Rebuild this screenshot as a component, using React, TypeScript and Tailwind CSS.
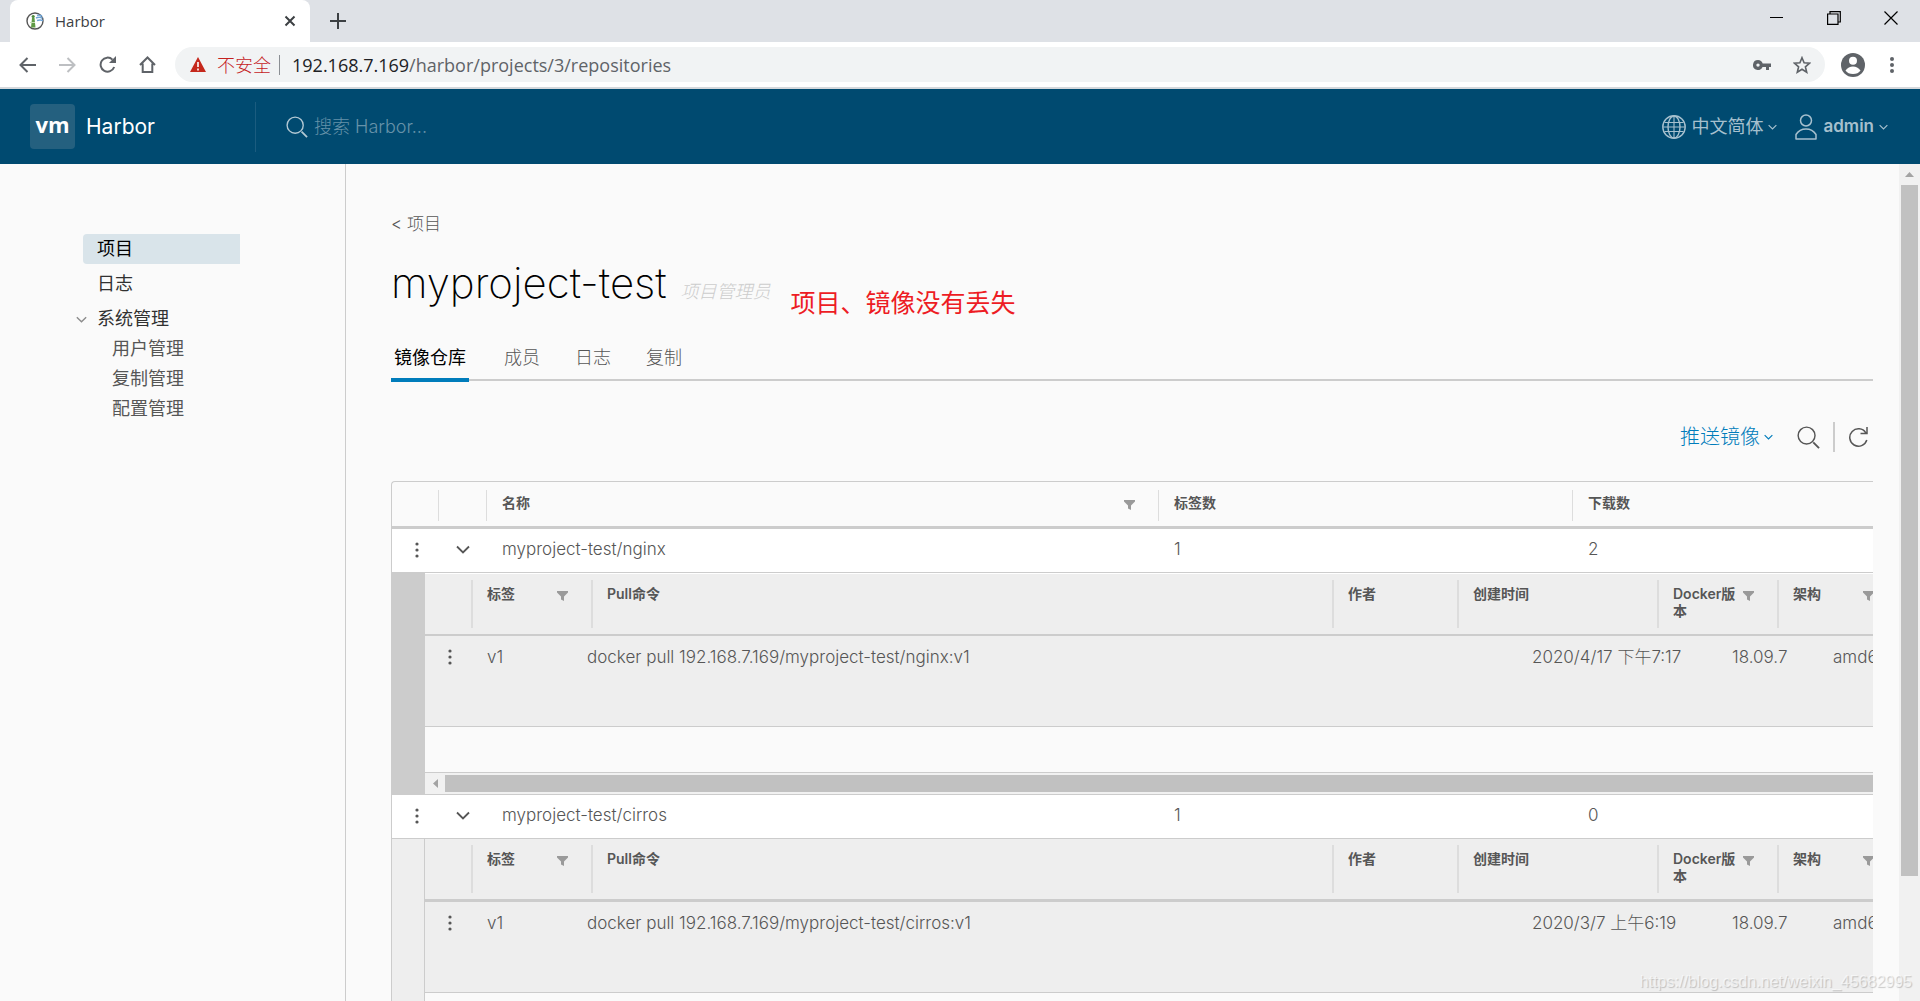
import React, { useState } from 'react';

interface Tag {
  name: string;
  pull: string;
  author: string;
  created: string;
  docker: string;
  arch: string;
}

interface Repo {
  name: string;
  tagsCount: number;
  pullCount: number;
  active: boolean;
  tags: Tag[];
}

const repos: Repo[] = [
  {
    name: 'myproject-test/nginx',
    tagsCount: 1,
    pullCount: 2,
    active: true,
    tags: [
      {
        name: 'v1',
        pull: 'docker pull 192.168.7.169/myproject-test/nginx:v1',
        author: '',
        created: '2020/4/17 下午7:17',
        docker: '18.09.7',
        arch: 'amd64',
      },
    ],
  },
  {
    name: 'myproject-test/cirros',
    tagsCount: 1,
    pullCount: 0,
    active: false,
    tags: [
      {
        name: 'v1',
        pull: 'docker pull 192.168.7.169/myproject-test/cirros:v1',
        author: '',
        created: '2020/3/7 上午6:19',
        docker: '18.09.7',
        arch: 'amd64',
      },
    ],
  },
];

const projectTabs = ['镜像仓库', '成员', '日志', '复制'];
const adminLinks = ['用户管理', '复制管理', '配置管理'];

function Caret({ className = '' }: { className?: string }) {
  return (
    <svg viewBox="0 0 14 9" fill="none" stroke="currentColor" className={className}>
      <path d="M1 1.5l6 6 6-6" strokeWidth="1.8" />
    </svg>
  );
}

function FilterIcon() {
  return (
    <svg viewBox="0 0 11 10" className="h-[10px] w-[11px] shrink-0">
      <path d="M0 0h11v1.5L7 5.5V10l-3-1.5v-3L0 1.5z" fill="#9a9a9a" />
    </svg>
  );
}

function Dots() {
  return (
    <svg viewBox="0 0 4 16" className="h-4 w-1" fill="#565656">
      <circle cx="2" cy="2" r="1.6" />
      <circle cx="2" cy="8" r="1.6" />
      <circle cx="2" cy="14" r="1.6" />
    </svg>
  );
}

function SearchIcon({ className = '' }: { className?: string }) {
  return (
    <svg viewBox="0 0 24 24" fill="none" stroke="currentColor" strokeWidth="1.5" className={className}>
      <circle cx="10" cy="10" r="8.8" />
      <path d="M17 17l6 6" strokeWidth="1.9" />
    </svg>
  );
}

function BrowserChrome() {
  return (
    <div className="shrink-0 font-['Open_Sans','Noto_Sans_CJK_SC',sans-serif]">
      <div className="flex h-[42px] items-stretch bg-[#dee1e6] pl-[10px]">
        <div className="flex w-[300px] items-center rounded-t-lg bg-white pr-[14px] pl-4">
          <svg viewBox="0 0 18 18" className="mr-[11px] h-[18px] w-[18px]">
            <circle cx="9" cy="9" r="8" fill="#fff" stroke="#555" strokeWidth="1.4" />
            <path d="M11 3.5q2-1 5 .5M10 6q3-1.500 6.500 0M11 8.500q3-1 6 0" stroke="#6fa5d8" strokeWidth="1.4" fill="none" />
            <path d="M6 6h2.500l1 9.500H5z" fill="#5f9a45" />
            <circle cx="7.200" cy="4.500" r="1.600" fill="#4c8a3a" />
            <path d="M4 10.500h5" stroke="#c6dfb5" strokeWidth="1" />
          </svg>
          <span className="flex-1 text-[15px] text-[#3c4043]">Harbor</span>
          <button aria-label="关闭标签页">
            <svg viewBox="0 0 12 12" className="h-3 w-3" stroke="#3c4043" strokeWidth="2">
              <path d="M1.500 1.500l9 9M10.500 1.500l-9 9" />
            </svg>
          </button>
        </div>
        <button aria-label="新标签页" className="ml-5">
          <svg viewBox="0 0 16 16" className="h-4 w-4" stroke="#3c4043" strokeWidth="2">
            <path d="M8 0v16M0 8h16" />
          </svg>
        </button>
        <div className="ml-auto flex items-center gap-[43px] pr-[22px] pb-[6px]">
          <button aria-label="最小化">
            <svg viewBox="0 0 14 14" className="h-[14px] w-[14px]" stroke="#000" shapeRendering="crispEdges">
              <path d="M0 6.500h13" />
            </svg>
          </button>
          <button aria-label="还原">
            <svg viewBox="0 0 14 14" className="h-[14px] w-[14px]" fill="none" stroke="#000" strokeWidth="1.200">
              <path d="M.6 3h10.400v10.400H.6z M3 3V.7h10.300V11H11" />
            </svg>
          </button>
          <button aria-label="关闭">
            <svg viewBox="0 0 14 14" className="h-[14px] w-[14px]" stroke="#000" strokeWidth="1.200">
              <path d="M.5 .5l13 13M13.500 .5l-13 13" />
            </svg>
          </button>
        </div>
      </div>
      <div className="flex h-[47px] items-center border-b-2 border-[#d5d8dc] bg-white pr-[26px] pl-[19px]">
        <div className="flex items-center gap-[23px] text-[#5f6368]">
          <button aria-label="后退">
            <svg viewBox="0 0 17 16" className="h-4 w-[17px]" fill="none" stroke="currentColor" strokeWidth="2">
              <path d="M17 8H1.500M8.500 1L1.500 8l7 7" />
            </svg>
          </button>
          <button aria-label="前进" className="text-[#bdbfc2]">
            <svg viewBox="0 0 17 16" className="h-4 w-[17px]" fill="none" stroke="currentColor" strokeWidth="2">
              <path d="M0 8h15.500M8.500 1l7 7-7 7" />
            </svg>
          </button>
          <button aria-label="重新加载">
            <svg viewBox="0 0 17 17" className="h-[17px] w-[17px]" fill="none" stroke="currentColor" strokeWidth="2">
              <path d="M15.200 11A7 7 0 1 1 13.500 3.600" />
              <path d="M17 0v7h-7z" fill="currentColor" stroke="none" />
            </svg>
          </button>
          <button aria-label="主页">
            <svg viewBox="0 0 17 17" className="h-[17px] w-[17px]" fill="none" stroke="currentColor" strokeWidth="2">
              <path d="M1 9l7.500-7.500L16 9M3.700 7.500V16h9.600V7.500" />
            </svg>
          </button>
        </div>
        <div className="ml-[19px] flex h-[35px] flex-1 items-center rounded-full bg-[#f1f3f4] pr-[14px] pl-[15px]">
          <svg viewBox="0 0 16 15" className="h-[15px] w-4">
            <path d="M8 0l8 15H0z" fill="#c5281c" />
            <path d="M8 5v5M8 11.500v2" stroke="#fff" strokeWidth="1.600" />
          </svg>
          <span className="ml-[11px] text-lg font-light text-[#c5221f]">不安全</span>
          <span className="mx-2 h-5 w-px bg-[#8b8f94]" />
          <span className="ml-1 text-lg text-[#202124]">192.168.7.169</span>
          <input
            aria-label="地址"
            defaultValue="/harbor/projects/3/repositories"
            className="min-w-0 flex-1 bg-transparent text-lg text-[#5f6368] outline-none"
          />
          <svg viewBox="0 0 18 10" className="mr-[22px] h-[10px] w-[18px]" fill="#5f6368">
            <path d="M5 0a5 5 0 1 0 4.600 7H13v3h3V7h2V3.500H9.700A5 5 0 0 0 5 0zm0 3.400a1.700 1.700 0 1 1 0 3.400 1.700 1.700 0 0 1 0-3.400z" fillRule="evenodd" />
          </svg>
          <svg viewBox="0 0 18 18" className="h-[18px] w-[18px]" fill="none" stroke="#5f6368" strokeWidth="1.600">
            <path d="M9 1.700l2.100 5.100 5.500.4-4.200 3.600 1.300 5.400L9 13.300l-4.700 2.900 1.300-5.400L1.400 7.200l5.500-.4z" />
          </svg>
        </div>
        <button aria-label="用户" className="ml-4">
          <svg viewBox="0 0 24 24" className="h-6 w-6">
            <circle cx="12" cy="12" r="12" fill="#5f6368" />
            <circle cx="12" cy="7.800" r="4" fill="#fff" />
            <path d="M4.500 17.500q3-4 7.500-4t7.500 4Q17 21 12 21t-7.500-3.500z" fill="#fff" />
          </svg>
        </button>
        <button aria-label="菜单" className="ml-[25px]">
          <svg viewBox="0 0 4 16" className="h-4 w-1" fill="#5f6368">
            <circle cx="2" cy="2" r="2" />
            <circle cx="2" cy="8" r="2" />
            <circle cx="2" cy="14" r="2" />
          </svg>
        </button>
      </div>
    </div>
  );
}

function Header() {
  return (
    <header className="flex h-[75px] shrink-0 items-center bg-[#004a70] pr-8 pl-[30px]">
      <a href="#" className="flex w-[225px] items-center">
        <span className="flex h-[45px] w-[45px] items-center justify-center rounded bg-[#24607f] pb-1 font-['Open_Sans',sans-serif] text-[22px] font-bold text-white">
          vm
        </span>
        <span className="ml-[11px] text-[21px] leading-7 text-white">Harbor</span>
      </a>
      <div className="flex h-[50px] flex-1 items-center border-l border-[#1b5c7f] pl-[30px]">
        <SearchIcon className="h-[22px] w-[22px] text-[#b3c9d4]" />
        <input
          aria-label="搜索"
          placeholder="搜索 Harbor..."
          className="ml-[6px] w-80 bg-transparent text-lg font-light text-white outline-none placeholder:text-[#6692a9]"
        />
      </div>
      <button className="flex items-center text-[#a6c0ce]">
        <svg viewBox="0 0 24 24" className="mr-[5px] h-6 w-6" fill="none" stroke="currentColor" strokeWidth="1.400">
          <circle cx="12" cy="12" r="11.200" />
          <ellipse cx="12" cy="12" rx="6" ry="11" />
          <path d="M12 1v22M2.500 7.500h19M1 12h22M2.500 16.500h19" strokeWidth="1.100" />
        </svg>
        <span className="text-lg">中文简体</span>
        <Caret className="ml-[5px] h-[6px] w-[9px]" />
      </button>
      <button className="ml-[18px] flex items-center text-[#a6c0ce]">
        <svg viewBox="0 0 22 26" className="mr-[6px] h-[26px] w-[22px]" fill="none" stroke="currentColor" strokeWidth="1.500">
          <circle cx="11" cy="6.500" r="5.500" />
          <path d="M1 25v-4.500q3.500-5.500 10-5.500t10 5.500V25z" strokeLinejoin="round" />
        </svg>
        <span className="text-[17px] font-semibold">admin</span>
        <Caret className="ml-[5px] h-[6px] w-[9px]" />
      </button>
    </header>
  );
}

function Sidebar() {
  return (
    <nav className="w-[346px] shrink-0 border-r border-[#ccc] pt-[70px] pl-[83px] text-lg leading-[30px]">
      <a href="#" className="block w-[157px] rounded-l bg-[#d9e4ea] pl-[14px] text-black">
        项目
      </a>
      <a href="#" className="mt-[5px] block w-[157px] pl-[14px] text-[#313131]">
        日志
      </a>
      <div className="mt-[5px] -ml-[7px] flex items-center text-[#313131]">
        <button aria-label="收起系统管理" className="mr-[10px]">
          <Caret className="h-[7px] w-[11px] text-[#8c8c8c]" />
        </button>
        <a href="#">系统管理</a>
      </div>
      {adminLinks.map((link) => (
        <a key={link} href="#" className="block w-[157px] pl-[29px] text-[#565656]">
          {link}
        </a>
      ))}
    </nav>
  );
}

function HeadCell({ label, filter, className = '' }: { label: string; filter?: boolean; className?: string }) {
  return (
    <th className={`flex gap-1 text-left text-sm leading-[17px] font-semibold ${className}`}>
      <span className="min-w-0 flex-1 break-all">{label}</span>
      {filter && (
        <button aria-label={`筛选${label}`} className="mt-[6px] h-[10px]">
          <FilterIcon />
        </button>
      )}
    </th>
  );
}

function TagTable({ tags, active }: { tags: Tag[]; active: boolean }) {
  const sep = 'my-[6px] h-12 border-l-2 border-[#ddd] pt-[5px] pl-[14px]';

  return (
    <div className={active ? 'flex bg-[#ccc]' : 'flex bg-[#eee]'}>
      <div className={active ? 'w-[33px] shrink-0' : 'w-[33px] shrink-0 border-r border-[#ccc]'} />
      <div className="min-w-0 flex-1 overflow-hidden bg-[#fafafa]">
        <table className="block w-[calc(100%+24px)]">
          <thead
            className={
              active
                ? 'block border-t border-b-2 border-t-white border-b-[#ccc] bg-[#eee]'
                : 'block border-b-[3px] border-[#ccc] bg-[#eee]'
            }
          >
            <tr className="flex">
              <th aria-label="操作" className="w-[46px] shrink-0" />
              <HeadCell label="标签" filter className={`${sep} w-[120px] shrink-0 pr-[23px]`} />
              <HeadCell label="Pull命令" className={`${sep} flex-1`} />
              <HeadCell label="作者" className={`${sep} w-[125px] shrink-0`} />
              <HeadCell label="创建时间" className={`${sep} w-[200px] shrink-0`} />
              <HeadCell label="Docker版本" filter className={`${sep} w-[120px] shrink-0 pr-[23px]`} />
              <HeadCell label="架构" filter className={`${sep} w-[120px] shrink-0 pr-[23px]`} />
            </tr>
          </thead>
          <tbody className="block">
            {tags.map((tag) => (
              <tr
                key={tag.name}
                className="flex h-[91px] border-b border-[#ccc] bg-[#eee] pt-[9px] text-[17px] leading-6 font-light text-[#565656]"
              >
                <td className="flex w-[46px] shrink-0 justify-center pt-1 pl-1">
                  <button aria-label="操作" className="h-4">
                    <Dots />
                  </button>
                </td>
                <td className="w-[100px] shrink-0 pl-4">{tag.name}</td>
                <td className="min-w-0 flex-1 pl-4">{tag.pull}</td>
                <td>{tag.author}</td>
                <td className="w-[200px] shrink-0 pl-4">{tag.created}</td>
                <td className="w-[101px] shrink-0 pl-4">{tag.docker}</td>
                <td className="w-20 shrink-0 pl-4">{tag.arch}</td>
              </tr>
            ))}
          </tbody>
        </table>
        <div className="h-[45px]" />
        <div className="flex h-[23px] items-center border-y border-[#ccc] bg-[#f1f1f1]">
          <div className="flex w-5 justify-center">
            <svg viewBox="0 0 5 9" className="h-[9px] w-[5px]">
              <path d="M5 0v9L0 4.500z" fill="#a3a3a3" />
            </svg>
          </div>
          <div className="h-[17px] flex-1 bg-[#c1c1c1]" />
        </div>
      </div>
    </div>
  );
}

function RepoGrid() {
  const sep = 'my-2 h-[31px] border-l border-[#ddd] pt-1 pl-[15px]';

  return (
    <div className="mt-[29px] overflow-hidden rounded-tl border-t border-l border-[#ccc] text-[#565656]">
      <table className="block">
        <thead className="block border-b-[3px] border-[#ccc]">
          <tr className="flex h-[44px]">
            <th aria-label="操作" className="w-[46px] shrink-0" />
            <th aria-label="展开" className="my-2 h-[31px] w-12 shrink-0 border-l border-[#ddd]" />
            <HeadCell label="名称" filter className={`${sep} flex-1 pr-[23px]`} />
            <HeadCell label="标签数" className={`${sep} w-[414px] shrink-0`} />
            <HeadCell label="下载数" className={`${sep} w-[301px] shrink-0`} />
          </tr>
        </thead>
        <tbody className="block">
          {repos.map((repo) => (
            <React.Fragment key={repo.name}>
              <tr className="flex h-11 border-b border-[#ccc] bg-white pt-2 text-[17px] leading-6 font-light">
                <td className="flex w-[46px] shrink-0 justify-center pt-[5px]">
                  <button aria-label="操作" className="ml-1 h-4">
                    <Dots />
                  </button>
                </td>
                <td className="flex w-12 shrink-0 justify-center pt-2">
                  <button aria-label="折叠" className="ml-[2px] h-[9px]">
                    <Caret className="h-[9px] w-[14px]" />
                  </button>
                </td>
                <td className="flex-1 pl-4">
                  <a href="#">{repo.name}</a>
                </td>
                <td className="w-[414px] shrink-0 pl-4">{repo.tagsCount}</td>
                <td className="w-[301px] shrink-0 pl-4">{repo.pullCount}</td>
              </tr>
              <tr className="block">
                <td colSpan={5} className="block">
                  <TagTable tags={repo.tags} active={repo.active} />
                </td>
              </tr>
            </React.Fragment>
          ))}
        </tbody>
      </table>
    </div>
  );
}

export default function App() {
  const [activeTab, setActiveTab] = useState('镜像仓库');

  return (
    <div className="relative flex h-screen flex-col overflow-hidden bg-[#fafafa] font-['Inter','Noto_Sans_CJK_SC',sans-serif] text-[#565656]">
      <BrowserChrome />
      <Header />
      <div className="flex min-h-0 flex-1">
        <Sidebar />
        <main className="min-w-0 flex-1 overflow-hidden pt-[47px] pr-[26px] pl-[45px]">
          <a href="#" className="block text-[17px] leading-[26px] font-light">
            &lt; 项目
          </a>
          <div className="mt-[18px] flex h-[56px] items-baseline leading-[56px]">
            <h1 className="text-[42px] font-extralight text-black">myproject-test</h1>
            <span className="ml-[14px] text-lg font-light text-[#ccc] italic">项目管理员</span>
            <span className="relative top-[14px] ml-5 text-[25px] text-[#ed1c24]">项目、镜像没有丢失</span>
          </div>
          <div role="tablist" className="mt-[26px] flex h-11 gap-[35px] border-b-2 border-[#ccc]">
            {projectTabs.map((tab) => (
              <button
                key={tab}
                role="tab"
                aria-selected={tab === activeTab}
                onClick={() => setActiveTab(tab)}
                className={
                  tab === activeTab
                    ? '-mb-[3px] border-b-4 border-[#007cbb] px-[3px] text-lg text-black'
                    : 'text-lg font-light text-[#565656]'
                }
              >
                {tab}
              </button>
            ))}
          </div>
          <div className="mt-[41px] flex h-[30px] items-center justify-end">
            <button className="flex items-center text-xl font-light text-[#007cbb]">
              推送镜像
              <Caret className="ml-1 h-[6px] w-[9px]" />
            </button>
            <button aria-label="搜索镜像" className="mr-[13px] ml-6">
              <SearchIcon className="h-[23px] w-[23px]" />
            </button>
            <button aria-label="刷新" className="h-[30px] border-l-2 border-[#ccc] pr-[5px] pl-[14px]">
              <svg viewBox="0 0 19 20" className="h-5 w-[19px]" fill="none" stroke="currentColor" strokeWidth="1.500">
                <path d="M17.800 13A8.700 8.700 0 1 1 16.800 5.800M18 0v6.500h-6.500" />
              </svg>
            </button>
          </div>
          <RepoGrid />
        </main>
        <div className="flex w-[21px] shrink-0 flex-col items-center bg-[#f1f1f1]">
          <div className="flex h-[21px] shrink-0 items-center">
            <svg viewBox="0 0 9 5" className="h-[5px] w-[9px]">
              <path d="M0 5h9L4.500 0z" fill="#a3a3a3" />
            </svg>
          </div>
          <div className="h-[calc(100%-146px)] w-[17px] bg-[#c1c1c1]" />
        </div>
      </div>
      <div className="pointer-events-none absolute right-2 bottom-[7px] font-['Liberation_Sans',sans-serif] text-base text-white/60 [text-shadow:1px_1px_1px_rgb(0_0_0/0.2)]">
        https://blog.csdn.net/weixin_45682995
      </div>
    </div>
  );
}
